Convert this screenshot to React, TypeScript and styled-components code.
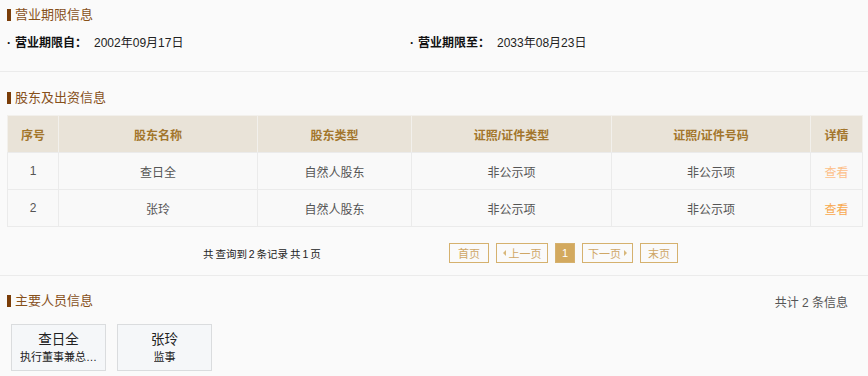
import React from "react";
import styled, { createGlobalStyle } from "styled-components";

const GlobalStyle = createGlobalStyle`
  html, body {
    margin: 0;
    padding: 0;
    background: #fafafa;
  }
  body {
    font-family: "Liberation Sans", "Noto Sans CJK SC", sans-serif;
    font-size: 12px;
    color: #333;
  }
`;

const Page = styled.div`
  width: 868px;
  padding: 0 6px 0 7px;
  box-sizing: border-box;
`;

const Section = styled.section<{ $top: number; $bottom: number; $divider?: boolean }>`
  padding-top: ${(p) => p.$top}px;
  padding-bottom: ${(p) => p.$bottom}px;
  margin: 0 -6px 0 -7px;
  padding-left: 7px;
  padding-right: 6px;
  border-bottom: ${(p) => (p.$divider ? "1px solid #ebebeb" : "none")};
`;

const TitleRow = styled.div`
  display: flex;
  align-items: center;
  justify-content: space-between;
  height: 20px;
`;

const Title = styled.h3`
  margin: 0;
  display: flex;
  align-items: center;
  font-size: 13px;
  font-weight: normal;
  color: #87501a;
  line-height: 20px;

  &::before {
    content: "";
    display: block;
    width: 4px;
    height: 12px;
    margin-right: 4px;
    background: #7a3d08;
  }
`;

const Count = styled.span`
  font-size: 12px;
  color: #555;
  margin-right: 14px;
`;

const InfoRow = styled.div`
  display: grid;
  grid-template-columns: 403px 1fr;
  margin-top: 10px;
  line-height: 16px;
`;

const InfoItem = styled.div`
  display: flex;
  align-items: center;
`;

const Dot = styled.span`
  width: 8px;
  font-weight: bold;
  color: #111;
`;

const Label = styled.span`
  font-weight: bold;
  color: #111;
  margin-right: 7px;
`;

const Value = styled.span`
  color: #222;
`;

const Table = styled.table`
  width: 855px;
  margin-top: 7px;
  border-collapse: collapse;
  table-layout: fixed;
  border: 1px solid #ebebeb;
`;

const Th = styled.th`
  height: 36px;
  padding: 0;
  background: #e9e3d8;
  color: #a3762c;
  font-weight: bold;
  font-size: 12px;
  text-align: center;
  border: 1px solid #f2f0ec;
  border-bottom-color: #ebebeb;
`;

const Td = styled.td`
  height: 36px;
  padding: 0;
  text-align: center;
  color: #555;
  font-size: 12px;
  border: 1px solid #ebebeb;
  background: #f9f9f9;
`;

const ViewLink = styled.a<{ $light?: boolean }>`
  color: ${(p) => (p.$light ? "#fdc089" : "#f8a94f")};
  text-decoration: none;
  cursor: pointer;
`;

const Pager = styled.div`
  display: flex;
  align-items: center;
  margin-top: 16px;
  height: 20px;
`;

const PagerInfo = styled.span`
  flex: 0 0 442px;
  padding-left: 196px;
  box-sizing: border-box;
  white-space: nowrap;
  font-size: 10.5px;
  word-spacing: -1px;
  color: #222;
`;

const PageButtons = styled.div`
  display: flex;
  align-items: center;
  gap: 7px;
`;

const PageButton = styled.span<{ $w: number; $active?: boolean }>`
  display: flex;
  align-items: center;
  justify-content: center;
  gap: 3px;
  box-sizing: border-box;
  width: ${(p) => p.$w}px;
  height: 20px;
  border: 1px solid #d5b16e;
  background: ${(p) => (p.$active ? "#d3a95e" : "transparent")};
  color: ${(p) => (p.$active ? "#fff" : "#cfa766")};
  font-size: 11px;
`;

const Arrow = styled.span<{ $dir: "left" | "right" }>`
  width: 0;
  height: 0;
  border-top: 3px solid transparent;
  border-bottom: 3px solid transparent;
  ${(p) =>
    p.$dir === "left"
      ? "border-right: 3px solid #d8b77a;"
      : "border-left: 3px solid #d8b77a;"}
`;

const Cards = styled.div`
  display: flex;
  gap: 11px;
  margin-top: 13px;
  padding-left: 4px;
`;

const Card = styled.div`
  width: 95px;
  height: 47px;
  box-sizing: border-box;
  border: 1px solid #dadcde;
  background: #f5f7f9;
  display: flex;
  flex-direction: column;
  align-items: center;
  justify-content: center;
  padding: 0 8px;
`;

const CardName = styled.div`
  font-size: 13.5px;
  color: #222;
  line-height: 18px;
`;

const CardRole = styled.div`
  font-size: 11px;
  color: #222;
  line-height: 16px;
  max-width: 100%;
  white-space: nowrap;
  overflow: hidden;
  text-overflow: ellipsis;
`;

const columns = [
  { name: "序号", w: 51 },
  { name: "股东名称", w: 199 },
  { name: "股东类型", w: 154 },
  { name: "证照/证件类型", w: 200 },
  { name: "证照/证件号码", w: 199 },
  { name: "详情", w: 52 },
];

const shareholders = [
  { no: 1, name: "查日全", type: "自然人股东" },
  { no: 2, name: "张玲", type: "自然人股东" },
];

const people = [
  { name: "查日全", role: "执行董事兼总经理" },
  { name: "张玲", role: "监事" },
];

export default function App() {
  return (
    <Page>
      <GlobalStyle />
      <Section $top={5} $bottom={20} $divider>
        <TitleRow>
          <Title>营业期限信息</Title>
        </TitleRow>
        <InfoRow>
          <InfoItem>
            <Dot>·</Dot>
            <Label>营业期限自：</Label>
            <Value>2002年09月17日</Value>
          </InfoItem>
          <InfoItem>
            <Dot>·</Dot>
            <Label>营业期限至：</Label>
            <Value>2033年08月23日</Value>
          </InfoItem>
        </InfoRow>
      </Section>

      <Section $top={16} $bottom={12} $divider>
        <TitleRow>
          <Title>股东及出资信息</Title>
        </TitleRow>
        <Table>
          <colgroup>
            {columns.map((c) => (
              <col key={c.name} style={{ width: c.w }} />
            ))}
          </colgroup>
          <thead>
            <tr>
              {columns.map((c) => (
                <Th key={c.name}>{c.name}</Th>
              ))}
            </tr>
          </thead>
          <tbody>
            {shareholders.map((s, i) => (
              <tr key={s.no}>
                <Td>{s.no}</Td>
                <Td>{s.name}</Td>
                <Td>{s.type}</Td>
                <Td>非公示项</Td>
                <Td>非公示项</Td>
                <Td>
                  <ViewLink $light={i === 0}>查看</ViewLink>
                </Td>
              </tr>
            ))}
          </tbody>
        </Table>
        <Pager>
          <PagerInfo>共 查询到 2 条记录 共 1 页</PagerInfo>
          <PageButtons>
            <PageButton $w={40}>首页</PageButton>
            <PageButton $w={52}>
              <Arrow $dir="left" />
              上一页
            </PageButton>
            <PageButton $w={20} $active>
              1
            </PageButton>
            <PageButton $w={51}>
              下一页
              <Arrow $dir="right" />
            </PageButton>
            <PageButton $w={38}>末页</PageButton>
          </PageButtons>
        </Pager>
      </Section>

      <Section $top={15} $bottom={0}>
        <TitleRow>
          <Title>主要人员信息</Title>
          <Count>共计 2 条信息</Count>
        </TitleRow>
        <Cards>
          {people.map((p) => (
            <Card key={p.name}>
              <CardName>{p.name}</CardName>
              <CardRole>{p.role}</CardRole>
            </Card>
          ))}
        </Cards>
      </Section>
    </Page>
  );
}
